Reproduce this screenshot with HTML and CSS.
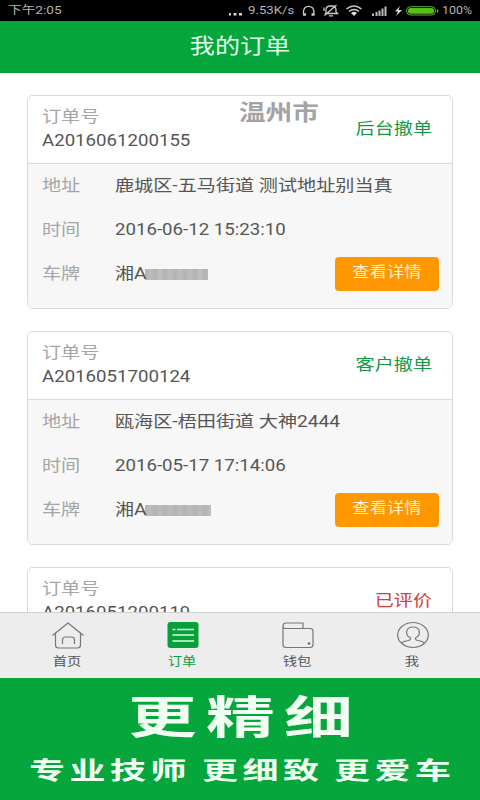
FILE: index.html
```html
<!DOCTYPE html>
<html lang="zh-CN">
<head>
<meta charset="utf-8">
<title>我的订单</title>
<link rel="stylesheet" href="styles.css">
</head>
<body>
<div class="status">
  <span class="wide time">下午2:05</span>
  <svg class="status-icons" width="250" height="21" viewBox="0 0 250 21">
    <g fill="#d4d4d4"><rect x="-1" y="13" width="3" height="2.500"/><rect x="4.500" y="13" width="3" height="2.500"/><rect x="10" y="13" width="3" height="2.500"/></g>
    <g fill="none" stroke="#c9c9c9" stroke-width="1.300">
      <path d="M74.500 15v-3.500a5.200 5.200 0 0 1 10.400 0V15"/>
      <path d="M74 14.500h3M82.500 14.500h3" stroke-width="2.400"/>
      <path d="M97 13V9.500q.5-3.500 4-3.500h2q3.500 0 4 3.500V12l1.500 1.500H96zM100 15.800h4M107.500 5l-12 10.500M95 7.500v3.500"/>
      <path d="M117.500 9q7.500-6 15 0M120 11.500q5-4 10 0" stroke-width="1.600"/>
    </g>
    <path d="M122 13q3-2.500 6 0l-3 3z" fill="#ddd"/>
    <path d="M143 13.500h2V16h-2zM146.500 12h2v4h-2zM149.500 10.500h2V16h-2zM152.500 8.500h2V16h-2zM155.500 6.500h2V16h-2z" fill="#bbb"/>
    <path d="M171 6l-5 5.500h3L167 16l6-6h-3.500z" fill="#ddd"/>
    <rect x="177.500" y="6.700" width="29" height="8.300" rx="4" fill="none" stroke="#69a83c"/>
    <rect x="179" y="8" width="26" height="5.700" rx="2.500" fill="#56bd1a"/>
    <path d="M208.500 9.500v3" stroke="#69a83c" stroke-width="1.500"/>
  </svg>
  <span class="wide speed">9.53K/s</span>
  <span class="wide percent">100%</span>
</div>
<header class="title"><span class="wide">我的订单</span></header>
<main class="orders">
  <article class="card">
    <div class="card-head">
      <div class="order-no"><span class="wide label">订单号</span><span class="wide number">A2016061200155</span></div>
      <span class="wide state">后台撤单</span>
      <span class="wide city">温州市</span>
    </div>
    <div class="card-body">
      <div class="row"><span class="key"><span class="wide">地址</span></span><span class="wide">鹿城区-五马街道 测试地址别当真</span></div>
      <div class="row"><span class="key"><span class="wide">时间</span></span><span class="wide number">2016-06-12 15:23:10</span></div>
      <div class="row"><span class="key"><span class="wide">车牌</span></span><span class="plate"><span class="wide">湘A</span></span><span class="mask"></span><a class="detail"><span class="wide">查看详情</span></a></div>
    </div>
  </article>
  <article class="card">
    <div class="card-head">
      <div class="order-no"><span class="wide label">订单号</span><span class="wide number">A2016051700124</span></div>
      <span class="wide state">客户撤单</span>
    </div>
    <div class="card-body">
      <div class="row"><span class="key"><span class="wide">地址</span></span><span class="wide">瓯海区-梧田街道 大神2444</span></div>
      <div class="row"><span class="key"><span class="wide">时间</span></span><span class="wide number">2016-05-17 17:14:06</span></div>
      <div class="row"><span class="key"><span class="wide">车牌</span></span><span class="plate"><span class="wide">湘A</span></span><span class="mask long"></span><a class="detail"><span class="wide">查看详情</span></a></div>
    </div>
  </article>
  <article class="card">
    <div class="card-head">
      <div class="order-no"><span class="wide label">订单号</span><span class="wide number">A2016051200119</span></div>
      <span class="wide state rated">已评价</span>
    </div>
  </article>
</main>
<nav class="tabs">
  <a class="tab">
    <svg width="34" height="28" viewBox="0 0 34 28"><path d="M1.500 14.500L17 2l15.500 12.500M4.500 12v12q0 3 3 3h19q3 0 3-3V12M11.500 23v-4q0-3 3-3h6q3 0 3 3v4"/></svg>
    <span class="wide">首页</span>
  </a>
  <a class="tab active">
    <svg width="34" height="28" viewBox="0 0 34 28"><rect x="1.500" y="1" width="31" height="26" rx="3" fill="#07a03b" stroke="none"/><path d="M6.500 8.500h3M11 8.500h17M6.500 14h21.500M6.500 20h21.500" stroke="#d5ffe0" stroke-width="1.600"/></svg>
    <span class="wide">订单</span>
  </a>
  <a class="tab">
    <svg width="34" height="28" viewBox="0 0 34 28"><path d="M2 5v18.500q0 3 3 3h24q3 0 3-3V10.500q0-3-3-3H4.500Q2 7.500 2 5q0-3 3-3h17v5.500"/><circle cx="28" cy="22.500" r="1.300" fill="#666" stroke="none"/></svg>
    <span class="wide">钱包</span>
  </a>
  <a class="tab">
    <svg width="34" height="28" viewBox="0 0 34 28"><ellipse cx="17" cy="14" rx="15.300" ry="12.500"/><path d="M5.500 22q2-1.800 6.500-2.500 3-.6 2.500-2.500c-6-3-5-11 2.500-11s8.500 8 2.500 11q-.5 1.900 2.500 2.500 4.500.7 6.500 2.500"/></svg>
    <span class="wide">我</span>
  </a>
</nav>
<footer class="promo">
  <div class="slogan"><span class="wide">更精细</span></div>
  <div class="points"><span class="wide">专业技师</span><span class="wide">更细致</span><span class="wide">更爱车</span></div>
</footer>
</body>
</html>
```
FILE: styles.css
```css
* { box-sizing: border-box; }
body {
  margin: 0;
  width: 480px;
  height: 800px;
  overflow: hidden;
  display: flex;
  flex-direction: column;
  background: #fff;
  color: #555;
  font: 16px/24px Roboto, "Noto Sans CJK SC", sans-serif;
}
.wide {
  display: inline-block;
  white-space: nowrap;
  transform: scaleX(1.195);
  transform-origin: left center;
}
.number { transform: scaleX(1.165); }
.status {
  position: relative;
  height: 21px;
  flex: none;
  background: #000;
  color: #b5b5b5;
  font-size: 11px;
  line-height: 22px;
}
.status .wide { position: absolute; top: 0; }
.status .time { left: 8px; transform: scaleX(1.240); }
.status .speed { left: 248px; transform: scaleX(1.200); }
.status .percent { left: 442px; transform: scaleX(1.130); }
.status-icons { position: absolute; left: 229px; top: 0; }
.title {
  height: 52px;
  flex: none;
  background: #05a63c;
  color: #e6ffe9;
  text-align: center;
  font-size: 21px;
  line-height: 51px;
}
.title .wide { transform-origin: center; }
.orders {
  flex: 1;
  min-height: 0;
  overflow: hidden;
  padding: 22px 27px 0;
  display: flex;
  flex-direction: column;
  gap: 22px;
}
.card {
  flex: none;
  height: 214px;
  border: 1px solid #d9d9d9;
  border-radius: 6px;
  overflow: hidden;
}
.card-head {
  position: relative;
  height: 67px;
  padding: 0 20px 0 14px;
  display: flex;
  align-items: center;
  justify-content: space-between;
}
.order-no { display: flex; flex-direction: column; align-items: flex-start; padding-bottom: 2px; }
.label, .key { color: #a5a5a5; }
.state { color: #129c42; transform-origin: right center; padding-bottom: 2px; }
.rated { color: #cf403f; }
.city {
  position: absolute;
  left: 211px;
  top: 5px;
  color: #a3a3a3;
  font-size: 22px;
  font-weight: 700;
  transform: scaleX(1.210);
}
.card-body {
  height: 146px;
  border-top: 1px solid #dadada;
  background: #f7f7f7;
  padding: 0 13px 0 14px;
}
.row { height: 44px; display: flex; align-items: center; }
.key { width: 73px; }
.plate { width: 30px; }
.mask {
  width: 63px;
  height: 11px;
  background: repeating-linear-gradient(90deg, #b3b3b3, #bdbdbd 5px, #b3b3b3 10px);
}
.mask.long { width: 66px; }
.detail {
  margin-left: auto;
  width: 104px;
  height: 34px;
  border-radius: 4px;
  background: #ff9800;
  color: #fff0cf;
  font-size: 14.500px;
  line-height: 31px;
  text-align: center;
}
.detail .wide { transform-origin: center; }
.tabs {
  height: 66px;
  flex: none;
  padding: 8px 10px 0;
  display: grid;
  grid-template-columns: repeat(4, 1fr);
  background: #ededed;
  border-top: 1px solid #cfcfcf;
}
.tab {
  display: flex;
  flex-direction: column;
  align-items: center;
  font-size: 12px;
  line-height: 26px;
}
.tab svg { flex: none; fill: none; stroke: #777; stroke-width: 1.200; }
.tab .wide { transform-origin: center; }
.tab.active { color: #129c42; }
.promo {
  height: 122px;
  flex: none;
  background: #05a63c;
  color: #f0fff2;
  font-weight: 700;
}
.slogan { padding: 11px 0 0 128px; font-size: 45px; line-height: 60px; }
.slogan .wide { transform: scaleX(1.530); letter-spacing: 6px; }
.points {
  display: grid;
  grid-template-columns: 173px 132px auto;
  justify-items: start;
  padding-left: 29px;
  font-size: 24px;
  line-height: 44px;
}
.points .wide { transform: scaleX(1.500); letter-spacing: 3px; }
```
